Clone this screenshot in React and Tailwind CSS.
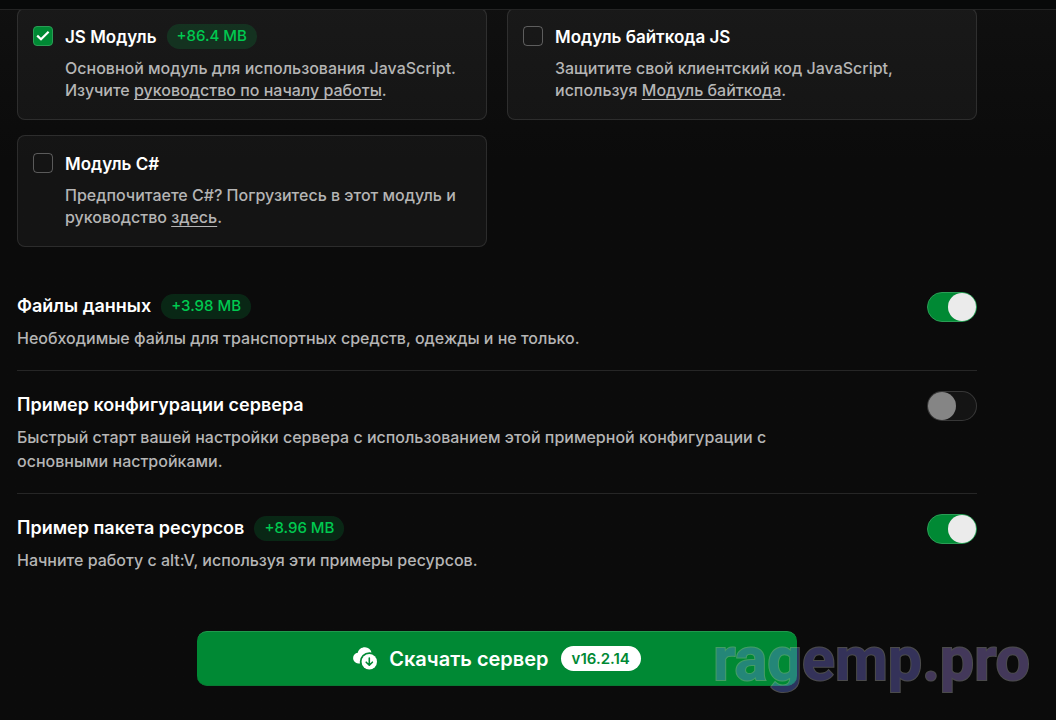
import React, { useState } from 'react';

const MODULES = [
  {
    id: 'js-module',
    title: 'JS Модуль',
    size: '+86.4 MB',
    before: 'Основной модуль для использования JavaScript. Изучите ',
    link: 'руководство по началу работы',
  },
  {
    id: 'js-bytecode-module',
    title: 'Модуль байткода JS',
    before: 'Защитите свой клиентский код JavaScript, используя ',
    link: 'Модуль байткода',
  },
  {
    id: 'csharp-module',
    title: 'Модуль C#',
    before: 'Предпочитаете C#? Погрузитесь в этот модуль и руководство ',
    link: 'здесь',
  },
];

const OPTIONS = [
  {
    id: 'data-files',
    title: 'Файлы данных',
    size: '+3.98 MB',
    text: 'Необходимые файлы для транспортных средств, одежды и не только.',
  },
  {
    id: 'example-config',
    title: 'Пример конфигурации сервера',
    text: 'Быстрый старт вашей настройки сервера с использованием этой примерной конфигурации с основными настройками.',
  },
  {
    id: 'example-resources',
    title: 'Пример пакета ресурсов',
    size: '+8.96 MB',
    text: 'Начните работу с alt:V, используя эти примеры ресурсов.',
  },
];

const SizeBadge = ({ children }) => (
  <span className="flex h-[25px] items-center rounded-full bg-[#00c94f]/15 px-[10px] text-[15px] font-medium text-[#00c950]">
    {children}
  </span>
);

const CloudDownloadIcon = () => (
  <svg className="size-6 shrink-0" viewBox="0 0 24 24" aria-hidden="true">
    <path
      fill="#fff"
      d="M12 0.3c3.2 0 5.7 2.1 6.5 5.1a9.6 9.6 0 0 0-2.2-.2 9.6 9.6 0 0 0-9.5 9.6c0 .6.1 1.2.2 1.8-4 .1-6.9-2-6.9-5.6 0-2.7 2-4.9 4.7-5.2C5.5 2.5 8.4.3 12 .3Z"
    />
    <circle cx="16.3" cy="14.7" r="7.7" fill="#fff" />
    <path
      d="M16.3 11v7M13.2 15.2l3.1 3 3.1-3"
      fill="none"
      stroke="#008934"
      strokeWidth="1.6"
      strokeLinecap="round"
      strokeLinejoin="round"
    />
  </svg>
);

const ModuleCard = ({ module, checked, onChange }) => (
  <div className="flex gap-3 rounded-lg border border-white/10 bg-white/4 px-[15px] pt-[15px] pb-[18px]">
    <div className="relative flex h-6 shrink-0 items-center">
      <input
        id={module.id}
        type="checkbox"
        checked={checked}
        onChange={onChange}
        className="peer size-5 appearance-none rounded-sm border border-white/30 checked:border-[#2a9d55] checked:bg-[#008934]"
      />
      <svg
        className="pointer-events-none absolute left-[3px] hidden size-[14px] peer-checked:block"
        viewBox="0 0 14 14"
        aria-hidden="true"
      >
        <path d="M1.2 6.6l3.8 3.6 7.6-7.4" fill="none" stroke="#fff" strokeWidth="2.2" />
      </svg>
    </div>
    <div className="min-w-0">
      <div className="flex h-[25px] items-center gap-[10px]">
        <label htmlFor={module.id} className="text-[17px] leading-7 font-semibold text-white">
          {module.title}
        </label>
        {module.size && <SizeBadge>{module.size}</SizeBadge>}
      </div>
      <p className="mt-2 text-base leading-[22px] font-medium text-[#b5b5b5]">
        {module.before}
        <a
          href="#guide"
          className="underline decoration-1 underline-offset-3 [text-decoration-skip-ink:none]"
        >
          {module.link}
        </a>
        .
      </p>
    </div>
  </div>
);

const OptionRow = ({ option, checked, onChange }) => (
  <div className="flex items-start justify-between gap-6 py-5">
    <div className="max-w-[780px]">
      <div className="flex h-7 items-center gap-[10px]">
        <label htmlFor={option.id} className="text-lg font-semibold text-white">
          {option.title}
        </label>
        {option.size && <SizeBadge>{option.size}</SizeBadge>}
      </div>
      <p className="mt-[6px] text-base leading-6 font-medium text-[#b5b5b5]">{option.text}</p>
    </div>
    <input
      id={option.id}
      type="checkbox"
      role="switch"
      checked={checked}
      onChange={onChange}
      className="h-[30px] w-[50px] shrink-0 appearance-none rounded-full border border-white/15 bg-white/4 before:block before:h-7 before:w-7 before:rounded-full before:bg-[#858585] checked:border-[#2a9d55] checked:bg-[#008934] checked:before:translate-x-5 checked:before:bg-[#ebebeb]"
    />
  </div>
);

const App = () => {
  const [selected, setSelected] = useState({
    'js-module': true,
    'data-files': true,
    'example-resources': true,
  });

  const toggle = (id) => setSelected({ ...selected, [id]: !selected[id] });

  return (
    <div className="min-h-screen bg-[#0b0b0b] bg-linear-to-b from-[#101010] to-[#0b0b0b] to-[160px] font-['Inter','Liberation_Sans',sans-serif]">
      {/* Bottom edge of the sticky header */}
      <header className="sticky top-0 z-10 h-[10px] border-b border-[#242424] bg-[#080909]" />

      <main className="-mt-[2px] px-[17px] pb-[34px]">
        <div className="max-w-[960px]">
          <section className="grid grid-cols-2 gap-x-5 gap-y-[15px]">
            {MODULES.map((module) => (
              <ModuleCard
                key={module.id}
                module={module}
                checked={!!selected[module.id]}
                onChange={() => toggle(module.id)}
              />
            ))}
          </section>

          <section className="mt-[25px] divide-y divide-[#262626]">
            {OPTIONS.map((option) => (
              <OptionRow
                key={option.id}
                option={option}
                checked={!!selected[option.id]}
                onChange={() => toggle(option.id)}
              />
            ))}
          </section>

          <div className="mt-[39px] flex justify-center">
            <button
              type="button"
              className="flex h-[55px] w-full max-w-[600px] items-center justify-center gap-3 rounded-[10px] border-t border-b border-t-[#1f9a4d] border-b-[#087a33] bg-[#008934] text-xl font-semibold text-white"
            >
              <CloudDownloadIcon />
              Скачать сервер
              <span className="flex h-[25px] items-center rounded-full bg-white px-[11px] text-[15px] font-semibold text-[#008934]">
                v16.2.14
              </span>
            </button>
          </div>
        </div>
      </main>

      {/* Watermark over the page, the outline is painted behind the fill */}
      <div className="pointer-events-none fixed right-[26px] bottom-[25px] font-['Roboto',sans-serif] text-[61px] leading-[72px] font-bold opacity-35 [-webkit-text-stroke:2px_#c4c4c4] [paint-order:stroke_fill]">
        <span className="text-[#6882fa]">rag</span>
        <span className="text-[#807dea]">emp</span>
        <span className="text-[#ab8eed]">.pro</span>
      </div>
    </div>
  );
};

export default App;
